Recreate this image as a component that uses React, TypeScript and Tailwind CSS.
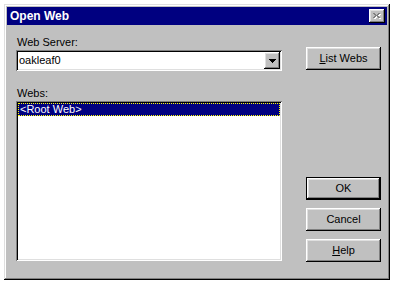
import React from "react";

const raised =
  "shadow-[inset_-1px_-1px_#000,inset_1px_1px_#fff,inset_-2px_-2px_#808080,inset_2px_2px_#dfdfdf]";
const sunken =
  "shadow-[inset_1px_1px_#808080,inset_-1px_-1px_#fff,inset_2px_2px_#000,inset_-2px_-2px_#dfdfdf]";

function Btn({ children, def }: { children: React.ReactNode; def?: boolean }) {
  if (def) {
    return (
      <div className="w-[75px] h-[23px] border border-black bg-[#c0c0c0]">
        <div className={`w-full h-full flex items-center justify-center ${raised}`}>{children}</div>
      </div>
    );
  }
  return (
    <div className={`w-[75px] h-[23px] bg-[#c0c0c0] flex items-center justify-center ${raised}`}>
      {children}
    </div>
  );
}

export default function App() {
  return (
    <div
      className="w-[393px] h-[285px] bg-white pt-[4px] pl-[4px] text-[11px] leading-[13px] text-black"
      style={{ fontFamily: '"Liberation Sans", Arial, sans-serif' }}
    >
      <div
        className={`w-[386px] h-[276px] bg-[#c0c0c0] p-[3px] flex flex-col shadow-[inset_-1px_-1px_#000,inset_1px_1px_#dfdfdf,inset_-2px_-2px_#808080,inset_2px_2px_#fff]`}
      >
        {/* Title bar */}
        <div className="h-[18px] bg-[#000080] flex items-center justify-between pl-[3px] pr-[2px]">
          <span className="text-white font-bold text-[12px] leading-[14px]">Open Web</span>
          <div className={`w-[16px] h-[14px] bg-[#c0c0c0] flex items-center justify-center ${raised}`}>
            <svg width="8" height="7" viewBox="0 0 8 7" shapeRendering="crispEdges">
              <path
                d="M1 1h2v1H1zM6 1h2v1H6zM2 2h2v1H2zM5 2h2v1H5zM3 3h3v1H3zM2 4h2v1H2zM5 4h2v1H5zM1 5h2v1H1zM6 5h2v1H6z"
                transform="translate(0.0,0)"
                fill="#fff"
              />
              <path
                d="M0 0h2v1H0zM5 0h2v1H5zM1 1h2v1H1zM4 1h2v1H4zM2 2h3v1H2zM1 3h2v1H1zM4 3h2v1H4zM0 4h2v1H0zM5 4h2v1H5z"
                fill="#808080"
              />
            </svg>
          </div>
        </div>

        {/* Body */}
        <div className="flex pl-[9px]">
          {/* Left column */}
          <div className="w-[266px] pt-[11px] flex flex-col">
            <div className="h-[13px] pl-[1px]">Web Server:</div>
            <div className={`mt-[1px] h-[21px] bg-white flex items-center pl-[3px] pr-[2px] ${sunken}`}>
              <span className="flex-1">oakleaf0</span>
              <div className={`w-[16px] h-[17px] bg-[#c0c0c0] flex items-center justify-center ${raised}`}>
                <svg width="7" height="4" viewBox="0 0 7 4" shapeRendering="crispEdges">
                  <path d="M0 0h7v1H0zM1 1h5v1H1zM2 2h3v1H2zM3 3h1v1H3z" fill="#000" />
                </svg>
              </div>
            </div>
            <div className="mt-[16px] h-[13px] pl-[1px]">Webs:</div>
            <div className={`mt-[1px] h-[160px] bg-white p-[2px] ${sunken}`}>
              <div className="h-[13px] bg-[#000080] border border-dotted border-[#ffff00] text-white flex items-center pl-[1px]">
                &lt;Root Web&gt;
              </div>
            </div>
          </div>

          {/* Right column */}
          <div className="ml-[24px] pt-[22px] flex flex-col">
            <Btn>
              <span>
                <span className="underline">L</span>ist Webs
              </span>
            </Btn>
            <div className="mt-[107px] flex flex-col gap-[8px]">
              <Btn def>OK</Btn>
              <Btn>Cancel</Btn>
              <Btn>
                <span>
                  <span className="underline">H</span>elp
                </span>
              </Btn>
            </div>
          </div>
        </div>
      </div>
    </div>
  );
}
